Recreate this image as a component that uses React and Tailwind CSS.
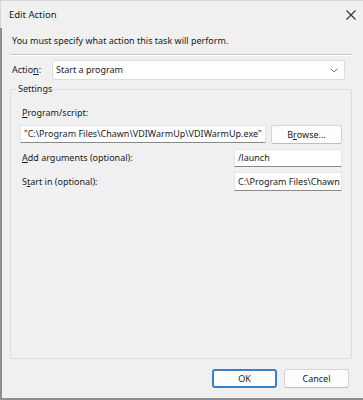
import React from 'react';

const font = { fontFamily: '"Noto Sans", "Open Sans", sans-serif' };

const TextBox = ({ value, className }) => (
  <div
    className={`h-[18px] bg-white border border-[#e5e5e5] border-b-[#8a8a8a] flex items-center px-[3px] overflow-hidden whitespace-nowrap text-[#1a1a1a] ${className}`}
  >
    {value}
  </div>
);

const Button = ({ children, primary, className }) => (
  <button
    className={`h-[19px] bg-[#fdfdfd] rounded-[3px] flex items-center justify-center text-[#1a1a1a] ${
      primary ? 'border-2 border-[#3b7fca]' : 'border border-[#d4d4d4] border-b-[#bdbdbd]'
    } ${className}`}
  >
    {children}
  </button>
);

export default function App() {
  return (
    <div className="w-[363px] h-[400px] bg-[#f0f0f0] flex flex-col text-[9px] leading-[16px] text-[#1a1a1a]" style={font}>
      {/* Title bar */}
      <div className="h-[28px] flex items-center justify-between pl-[8px] pr-[7px] border-t border-l border-[#d6d6d6]">
        <span className="text-[9.5px]">Edit Action</span>
        <svg width="10" height="10" viewBox="0 0 10 10" className="text-[#333]">
          <path d="M0.5 0.5 L9.5 9.5 M9.5 0.5 L0.5 9.5" stroke="currentColor" strokeWidth="1.1" />
        </svg>
      </div>

      {/* Body */}
      <div className="flex-1 flex flex-col pl-[8px] pr-[8px] border-l-2 border-b-2 border-[#8f8f8f]">
        <p className="mt-[5px] pl-[2px]">You must specify what action this task will perform.</p>
        <div className="mt-[5px] w-[342px] h-[2px] border-t border-[#c8c8c8] border-b border-b-white" />

        {/* Action row */}
        <div className="mt-[4px] flex items-center h-[20px] pl-[2px]">
          <span className="w-[40px]">
            Actio<span className="underline">n</span>:
          </span>
          <div className="w-[293px] h-[20px] bg-white border border-[#dcdcdc] rounded-[2px] flex items-center justify-between pl-[3px] pr-[6px]">
            <span>Start a program</span>
            <svg width="8" height="5" viewBox="0 0 8 5">
              <path d="M0.5 0.5 L4 4 L7.5 0.5" fill="none" stroke="#7a7a7a" strokeWidth="1" />
            </svg>
          </div>
        </div>

        {/* Settings groupbox */}
        <div className="relative mt-[9px] w-[342px] h-[270px] border border-[#dcdcdc] rounded-[2px] px-[9px] pt-[15px]">
          <span className="absolute -top-[9px] left-[5px] px-[2px] bg-[#f0f0f0]">Settings</span>

          <div className="pl-[2px]">
            <span className="underline">P</span>rogram/script:
          </div>
          <div className="mt-[4px] flex items-start gap-[5px]">
            <TextBox value={'"C:\\Program Files\\Chawn\\VDIWarmUp\\VDIWarmUp.exe"'} className="w-[246px]" />
            <Button className="w-[71px]">
              B<span className="underline">r</span>owse...
            </Button>
          </div>

          <div className="mt-[5px] flex items-center justify-between">
            <span className="pl-[2px]">
              <span className="underline">A</span>dd arguments (optional):
            </span>
            <TextBox value="/launch" className="w-[108px]" />
          </div>

          <div className="mt-[5px] flex items-center justify-between">
            <span className="pl-[2px]">
              S<span className="underline">t</span>art in (optional):
            </span>
            <TextBox value={'C:\\Program Files\\Chawn'} className="w-[108px] h-[19px]" />
          </div>
        </div>

        {/* Dialog buttons */}
        <div className="mt-[10px] flex justify-end gap-[7px] pr-[6px]">
          <Button primary className="w-[65px] h-[18px]">OK</Button>
          <Button className="w-[65px] h-[18px]">Cancel</Button>
        </div>
      </div>
    </div>
  );
}
